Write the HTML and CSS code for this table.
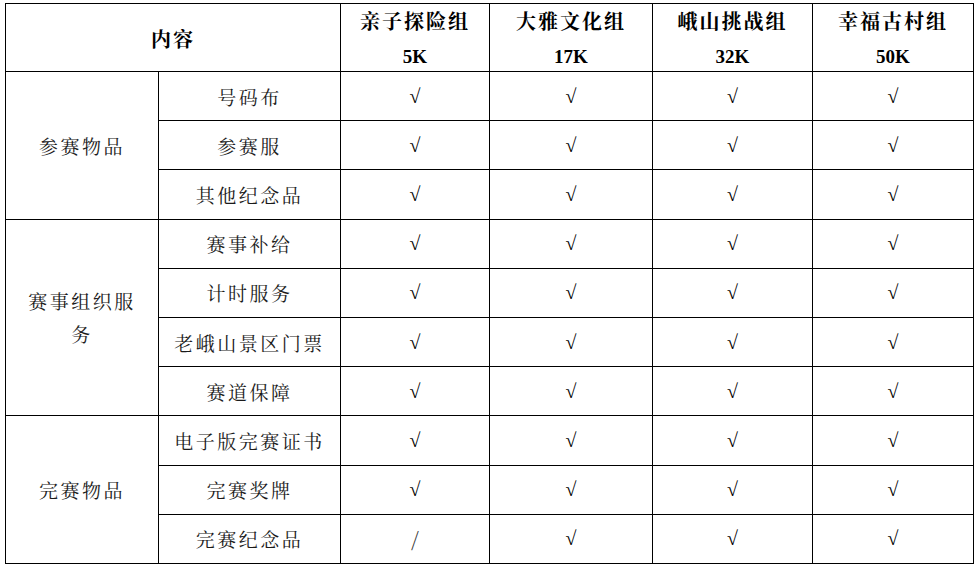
FILE: index.html
```html
<!DOCTYPE html>
<html lang="zh-CN">
<head>
<meta charset="utf-8">
<title>组别物资表</title>
<link rel="stylesheet" href="styles.css">
</head>
<body>
<table class="grid">
  <colgroup>
    <col class="c1"><col class="c2"><col class="c3"><col class="c4"><col class="c5"><col class="c6">
  </colgroup>
  <thead>
    <tr class="head">
      <th colspan="2" class="hd-main">内容</th>
      <th class="hd-grp"><span class="hname">亲子探险组</span><span class="hdist">5K</span></th>
      <th class="hd-grp"><span class="hname">大雅文化组</span><span class="hdist">17K</span></th>
      <th class="hd-grp"><span class="hname">峨山挑战组</span><span class="hdist">32K</span></th>
      <th class="hd-grp"><span class="hname">幸福古村组</span><span class="hdist">50K</span></th>
    </tr>
  </thead>
  <tbody>
    <tr><td rowspan="3" class="cat">参赛物品</td><td class="item">号码布</td><td class="mk">√</td><td class="mk">√</td><td class="mk">√</td><td class="mk">√</td></tr>
    <tr><td class="item">参赛服</td><td class="mk">√</td><td class="mk">√</td><td class="mk">√</td><td class="mk">√</td></tr>
    <tr><td class="item">其他纪念品</td><td class="mk">√</td><td class="mk">√</td><td class="mk">√</td><td class="mk">√</td></tr>
    <tr><td rowspan="4" class="cat">赛事组织服务</td><td class="item">赛事补给</td><td class="mk">√</td><td class="mk">√</td><td class="mk">√</td><td class="mk">√</td></tr>
    <tr><td class="item">计时服务</td><td class="mk">√</td><td class="mk">√</td><td class="mk">√</td><td class="mk">√</td></tr>
    <tr><td class="item">老峨山景区门票</td><td class="mk">√</td><td class="mk">√</td><td class="mk">√</td><td class="mk">√</td></tr>
    <tr><td class="item">赛道保障</td><td class="mk">√</td><td class="mk">√</td><td class="mk">√</td><td class="mk">√</td></tr>
    <tr><td rowspan="3" class="cat">完赛物品</td><td class="item">电子版完赛证书</td><td class="mk">√</td><td class="mk">√</td><td class="mk">√</td><td class="mk">√</td></tr>
    <tr><td class="item">完赛奖牌</td><td class="mk">√</td><td class="mk">√</td><td class="mk">√</td><td class="mk">√</td></tr>
    <tr><td class="item">完赛纪念品</td><td class="mk slash">/</td><td class="mk">√</td><td class="mk">√</td><td class="mk">√</td></tr>
  </tbody>
</table>
</body>
</html>
```

FILE: styles.css
```css
html, body {
  margin: 0;
  padding: 0;
  background: #fff;
}
body {
  padding: 3px 0 0 5px;
  font-family: "Noto Serif CJK SC", "Noto Sans CJK SC", serif;
  color: #1a1a1a;
}
.grid {
  border-collapse: collapse;
  table-layout: fixed;
  width: 969px;
}
.c1 { width: 153px; }
.c2 { width: 182px; }
.c3 { width: 149px; }
.c4 { width: 163px; }
.c5 { width: 160px; }
.c6 { width: 161px; }
.grid th, .grid td {
  border: 1px solid #000;
  padding: 0;
  text-align: center;
  vertical-align: middle;
}
.head {
  height: 68px;
}
.grid tbody tr {
  height: 49.2px;
}
.grid th {
  font-weight: bold;
  color: #000;
  font-size: 20px;
  letter-spacing: 2px;
}
.grid .hd-main {
  line-height: 28px;
  padding-top: 2px;
}
.grid .hd-grp {
  vertical-align: top;
  padding-top: 4px;
}
.hname, .hdist {
  display: block;
  line-height: 26px;
}
.hdist {
  margin-top: 10px;
  font-family: "Liberation Serif", serif;
  font-size: 19px;
  letter-spacing: 0;
}
.grid .cat {
  font-size: 19px;
  letter-spacing: 2.5px;
  line-height: 33px;
  padding: 0 12px;
}
.item {
  font-size: 19px;
  letter-spacing: 2.5px;
}
.mk {
  font-family: "Liberation Serif", serif;
  font-size: 20px;
  color: #000;
}
.grid .slash {
  font-family: "Noto Sans CJK SC", sans-serif;
  font-weight: 300;
  font-size: 20px;
  color: #333;
}
```
